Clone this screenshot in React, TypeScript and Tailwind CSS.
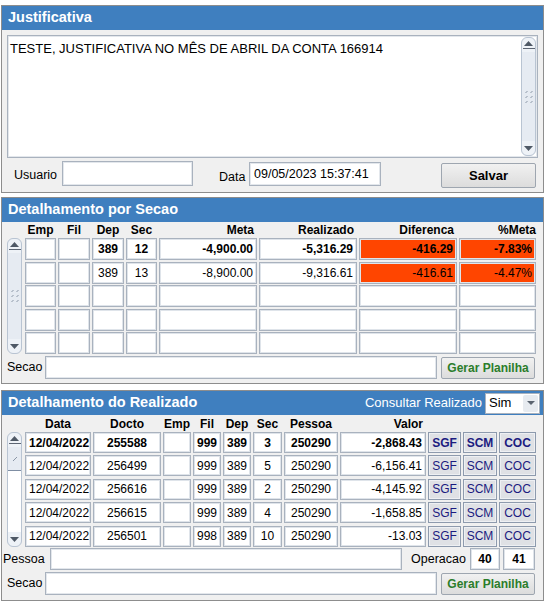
import React from 'react';
import clsx from 'clsx';
import { twMerge } from 'tailwind-merge';

const font = "font-['Liberation_Sans',Arial,sans-serif]";
const cn = (...a: any[]) => twMerge(clsx(a));

const Grip = () => (
  <svg width="8" height="14" viewBox="0 0 8 14">
    {[1, 6, 11].map((y) => (
      <g key={y} stroke="#8a96a6" strokeWidth="1">
        <path d={`M0.5 ${y + 2} L2.5 ${y}`} />
        <path d={`M5.5 ${y + 2} L7.5 ${y}`} />
      </g>
    ))}
  </svg>
);

const UpBtn = () => (
  <div className="flex h-[14px] shrink-0 flex-col items-center justify-center gap-[2px] rounded-t-[6px] bg-[#eef2f7]">
    <svg width="9" height="5" viewBox="0 0 9 5">
      <path d="M0 5 L4.5 0 L9 5 Z" fill="#4f5966" />
    </svg>
    <div className="h-[1px] w-[12px] bg-[#5c6573]" />
  </div>
);

const DownBtn = () => (
  <div className="flex h-[14px] shrink-0 items-center justify-center rounded-b-[6px] bg-[#eef2f7]">
    <svg width="9" height="5" viewBox="0 0 9 5">
      <path d="M0 0 L4.5 5 L9 0 Z" fill="#4f5966" />
    </svg>
  </div>
);

const ScrollBar = ({ thumb }: { thumb?: boolean }) => (
  <div className="flex h-full w-[15px] flex-col overflow-hidden rounded-[6px] border border-[#b9c4d2] bg-[#e6ebf2]">
    <UpBtn />
    {thumb ? (
      <>
        <div className="flex h-[24px] items-center justify-center border-b border-[#7f8ea3] bg-[#e6ebf2]">
          <svg width="6" height="6" viewBox="0 0 6 6">
            <path d="M1 5 L5 1" stroke="#8a96a6" />
          </svg>
        </div>
        <div className="flex-1 bg-white" />
      </>
    ) : (
      <div className="flex flex-1 items-center justify-center">
        <Grip />
      </div>
    )}
    <DownBtn />
  </div>
);

const Panel = ({ title, right, className, children }: { title: string; right?: React.ReactNode; className?: string; children: React.ReactNode }) => (
  <div className={cn('flex w-[543px] flex-col border border-[#8d8d8d] bg-[#f0f0f0]', className)}>
    <div className="flex h-[24px] shrink-0 items-center justify-between bg-[#3f7fbf] pl-[6px] pr-[3px]">
      <span className="text-[14.5px] font-bold text-white">{title}</span>
      {right}
    </div>
    {children}
  </div>
);

const Cell = ({ children, className }: { children?: React.ReactNode; className?: string }) => (
  <div
    className={cn(
      'flex shrink-0 items-center overflow-hidden whitespace-nowrap border border-[#a9b2be] bg-white px-[3px] text-[12px] text-black shadow-[inset_0_0_0_1px_#dfe4ea]',
      className
    )}
  >
    {children}
  </div>
);

const Input = ({ className, children }: { className?: string; children?: React.ReactNode }) => (
  <div className={cn('flex shrink-0 items-center border border-[#a9b2be] bg-white px-[4px] text-[12.5px] text-black shadow-[inset_0_0_0_1px_#e3e7ec]', className)}>
    {children}
  </div>
);

const Label = ({ children, className }: { children: React.ReactNode; className?: string }) => (
  <span className={cn('shrink-0 whitespace-nowrap text-[12.5px] text-black', className)}>{children}</span>
);

const GrayButton = ({ children, className }: { children: React.ReactNode; className?: string }) => (
  <div
    className={cn(
      'flex shrink-0 items-center justify-center rounded-[2px] border border-[#9ea6b0] bg-gradient-to-b from-[#f1f1f1] to-[#dcdcdc] text-[13px] font-bold',
      className
    )}
  >
    {children}
  </div>
);

const secaoRows = [
  { dep: '389', sec: '12', meta: '-4,900.00', real: '-5,316.29', dif: '-416.29', pct: '-7.83%', bold: true },
  { dep: '389', sec: '13', meta: '-8,900.00', real: '-9,316.61', dif: '-416.61', pct: '-4.47%' },
  {},
  {},
  {},
] as { dep?: string; sec?: string; meta?: string; real?: string; dif?: string; pct?: string; bold?: boolean }[];

const realRows = [
  { docto: '255588', fil: '999', sec: '3', valor: '-2,868.43', bold: true },
  { docto: '256499', fil: '999', sec: '5', valor: '-6,156.41' },
  { docto: '256616', fil: '999', sec: '2', valor: '-4,145.92' },
  { docto: '256615', fil: '999', sec: '4', valor: '-1,658.85' },
  { docto: '256501', fil: '998', sec: '10', valor: '-13.03' },
];

const gridSecao = 'grid grid-cols-[16px_31px_32px_32px_31px_98px_98px_98px_77px] gap-x-[2px]';
const gridReal = 'grid grid-cols-[16px_66px_68px_28px_28px_28px_29px_54px_86px_33px_34px_37px] gap-x-[2px]';

export default function App() {
  return (
    <div className={cn('h-[603px] w-[556px] overflow-hidden bg-white pl-[1px] pt-[5px]', font)}>
      {/* Justificativa */}
      <Panel title="Justificativa" className="h-[188px]">
        <div className="ml-[5px] mt-[5px] flex h-[123px] w-[531px] border border-[#a9b2be] bg-white shadow-[inset_0_0_0_1px_#e3e7ec]">
          <div className="flex-1 px-[2px] pt-[3px] text-[13px] text-black">
            TESTE, JUSTIFICATIVA NO MÊS DE ABRIL DA CONTA 166914
          </div>
          <div className="p-[1px]">
            <ScrollBar />
          </div>
        </div>
        <div className="mt-[3px] flex items-start">
          <Label className="ml-[12px] mt-[5px] w-[48px]">Usuario</Label>
          <Input className="h-[25px] w-[131px]" />
          <Label className="ml-[26px] mt-[7px] w-[30px]">Data</Label>
          <Input className="mt-[1px] h-[24px] w-[132px]">09/05/2023 15:37:41</Input>
          <GrayButton className="ml-[60px] mt-[2px] h-[25px] w-[95px]">Salvar</GrayButton>
        </div>
      </Panel>

      {/* Detalhamento por Secao */}
      <Panel title="Detalhamento por Secao" className="mt-[4px] h-[187px]">
        <div className={cn(gridSecao, 'ml-[5px] h-[16px] text-[12px] font-bold leading-[16px]')}>
          <div />
          <div className="text-center">Emp</div>
          <div className="text-center">Fil</div>
          <div className="text-center">Dep</div>
          <div className="text-center">Sec</div>
          <div className="pr-[3px] text-right">Meta</div>
          <div className="pr-[3px] text-right">Realizado</div>
          <div className="pr-[3px] text-right">Diferenca</div>
          <div className="text-right">%Meta</div>
        </div>
        <div className={cn(gridSecao, 'ml-[5px]')}>
          <div className="row-span-5 h-[116px]">
            <ScrollBar />
          </div>
          {secaoRows.map((r, i) => {
            const c = cn('h-[22px]', r.bold && 'font-bold', i > 0 && 'mt-[1.5px]');
            return (
              <React.Fragment key={i}>
                <Cell className={c} />
                <Cell className={c} />
                <Cell className={cn(c, 'justify-center')}>{r.dep}</Cell>
                <Cell className={cn(c, 'justify-center')}>{r.sec}</Cell>
                <Cell className={cn(c, 'justify-end')}>{r.meta}</Cell>
                <Cell className={cn(c, 'justify-end')}>{r.real}</Cell>
                <Cell className={cn(c, 'justify-end', r.dif && 'bg-[#ff4500]')}>{r.dif}</Cell>
                <Cell className={cn(c, 'justify-end', r.pct && 'bg-[#ff4500]')}>{r.pct}</Cell>
              </React.Fragment>
            );
          })}
        </div>
        <div className="mt-[2px] flex items-center">
          <Label className="ml-[5px] w-[38px]">Secao</Label>
          <Input className="h-[23px] w-[392px]" />
          <GrayButton className="ml-[4px] h-[22px] w-[94px] text-[12px] text-[#2b7d2b]">Gerar Planilha</GrayButton>
        </div>
      </Panel>

      {/* Detalhamento do Realizado */}
      <Panel
        title="Detalhamento do Realizado"
        className="mt-[6px] h-[211px]"
        right={
          <div className="flex items-center">
            <span className="mr-[3px] text-[13px] text-white">Consultar Realizado</span>
            <div className="flex h-[21px] w-[55px] items-center justify-between border border-[#a9b2be] bg-white pl-[3px] text-[13px]">
              Sim
              <div className="mr-[1px] flex h-[17px] w-[15px] items-center justify-center rounded-[2px] bg-[#e7ebf0]">
                <svg width="8" height="4" viewBox="0 0 8 4">
                  <path d="M0 0 L4 4 L8 0 Z" fill="#5b6470" />
                </svg>
              </div>
            </div>
          </div>
        }
      >
        <div className={cn(gridReal, 'ml-[5px] mt-[1px] h-[16px] text-[12px] font-bold leading-[16px]')}>
          <div />
          <div className="text-center">Data</div>
          <div className="text-center">Docto</div>
          <div className="text-center">Emp</div>
          <div className="text-center">Fil</div>
          <div className="text-center">Dep</div>
          <div className="text-center">Sec</div>
          <div className="text-center">Pessoa</div>
          <div className="pr-[3px] text-right">Valor</div>
          <div />
          <div />
          <div />
        </div>
        <div className={cn(gridReal, 'ml-[5px]')}>
          <div className="row-span-5 h-[115px]">
            <ScrollBar thumb />
          </div>
          {realRows.map((r, i) => {
            const c = cn('h-[21px]', r.bold && 'font-bold', i > 0 && 'mt-[2px]');
            const b = cn(
              'flex h-[21px] items-center justify-center border border-[#8d9aad] bg-[#dfe1e5] text-[12px] text-[#1b1b80] shadow-[inset_0_0_0_1px_#eef0f3]',
              r.bold && 'font-bold',
              i > 0 && 'mt-[2px]'
            );
            return (
              <React.Fragment key={i}>
                <Cell className={c}>12/04/2022</Cell>
                <Cell className={cn(c, 'justify-center')}>{r.docto}</Cell>
                <Cell className={c} />
                <Cell className={cn(c, 'justify-center')}>{r.fil}</Cell>
                <Cell className={cn(c, 'justify-center')}>389</Cell>
                <Cell className={cn(c, 'justify-center')}>{r.sec}</Cell>
                <Cell className={cn(c, 'justify-center')}>250290</Cell>
                <Cell className={cn(c, 'justify-end')}>{r.valor}</Cell>
                <div className={b}>SGF</div>
                <div className={b}>SCM</div>
                <div className={b}>COC</div>
              </React.Fragment>
            );
          })}
        </div>
        <div className="mt-[1px] flex items-center">
          <Label className="ml-[1px] w-[47px]">Pessoa</Label>
          <Input className="h-[22px] w-[352px]" />
          <Label className="ml-[9px] w-[59px]">Operacao</Label>
          <Cell className="h-[22px] w-[30px] justify-center font-bold">40</Cell>
          <Cell className="ml-[3px] h-[22px] w-[32px] justify-center font-bold">41</Cell>
        </div>
        <div className="mt-[2px] flex items-center">
          <Label className="ml-[5px] w-[38px]">Secao</Label>
          <Input className="h-[23px] w-[392px]" />
          <GrayButton className="ml-[4px] h-[22px] w-[94px] text-[12px] text-[#2b7d2b]">Gerar Planilha</GrayButton>
        </div>
      </Panel>
    </div>
  );
}
